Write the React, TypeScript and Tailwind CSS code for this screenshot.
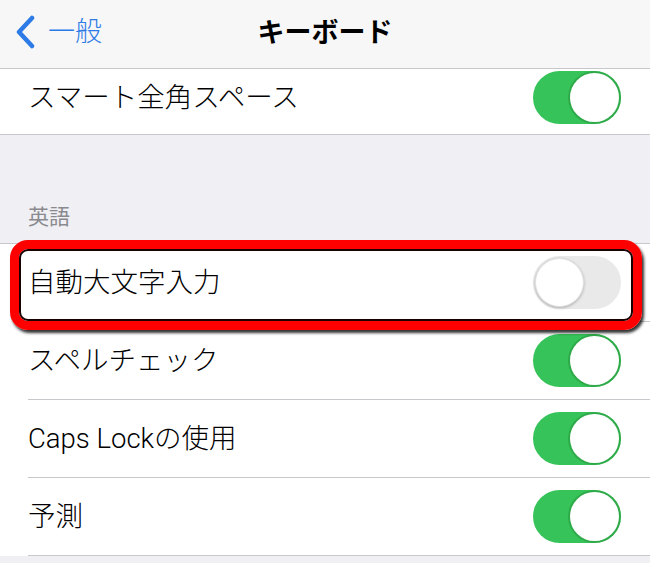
import React from "react";

const font = { fontFamily: 'Roboto, "Noto Sans CJK JP", sans-serif' };

function Toggle({ on }: { on: boolean }) {
  return on ? (
    <div className="relative w-[88px] h-[53px] rounded-full bg-[#36c45a] shrink-0">
      <div className="absolute right-[2px] top-[2px] w-[49px] h-[49px] rounded-full bg-white shadow-[0_0_0_2px_rgba(40,150,60,0.55)]" />
    </div>
  ) : (
    <div className="relative w-[88px] h-[53px] rounded-full bg-[#e9e9ea] shrink-0">
      <div className="absolute left-[2px] top-[2px] w-[49px] h-[49px] rounded-full bg-white shadow-[0_1px_3px_rgba(0,0,0,0.25)] border border-[#e0e0e0]" />
    </div>
  );
}

function Row({ label, on }: { label: string; on: boolean }) {
  return (
    <div className="h-[78px] bg-white pl-[28px] flex">
      <div className="flex-1 flex items-center justify-between pr-[29px] border-b border-[#c8c7cc]">
        <span className="text-[27.5px] font-light text-black leading-none">{label}</span>
        <Toggle on={on} />
      </div>
    </div>
  );
}

export default function App() {
  return (
    <div className="w-[650px] h-[563px] bg-[#efeff4] overflow-hidden relative" style={font}>
      {/* Nav bar */}
      <div className="h-[69px] bg-[#f7f7f7] border-b border-[#c8c7cc] relative flex items-center justify-center">
        <div className="absolute left-[14px] top-[15px] flex items-center gap-[12px] text-[#2d7be6]">
          <svg width="22" height="34" viewBox="0 0 22 34">
            <path d="M18 3 L5 17 L18 31" stroke="#2d7be6" strokeWidth="4.5" fill="none" strokeLinecap="round" strokeLinejoin="round" />
          </svg>
          <span className="text-[27px] font-light leading-none">一般</span>
        </div>
        <span className="text-[27px] font-bold text-black leading-none -mt-[2px]">キーボード</span>
      </div>

      {/* Row 1 */}
      <div className="h-[66px] bg-white border-b border-[#c8c7cc] flex items-center justify-between pl-[28px] pr-[29px] pb-[8px]">
        <span className="text-[27.5px] font-light text-black leading-none">スマート全角スペース</span>
        <Toggle on />
      </div>

      {/* Section header */}
      <div className="h-[108px] flex items-end pl-[28px] pb-[15px]">
        <span className="text-[21px] text-[#8a8a8e] leading-none">英語</span>
      </div>

      {/* Group */}
      <div className="border-t border-[#c8c7cc] relative">
        <Row label="自動大文字入力" on={false} />
        <Row label="スペルチェック" on />
        <Row label="Caps Lockの使用" on />
        <Row label="予測" on />

        {/* red highlight annotation */}
        <div className="absolute left-[10px] -top-[4px] w-[632px] h-[90px] rounded-[18px] border-[9px] border-[#ff0000] shadow-[2px_3px_3px_rgba(0,0,0,0.8)] pointer-events-none">
          <div className="w-full h-full rounded-[9px] border-2 border-[#1a0000]" />
        </div>
      </div>
    </div>
  );
}
